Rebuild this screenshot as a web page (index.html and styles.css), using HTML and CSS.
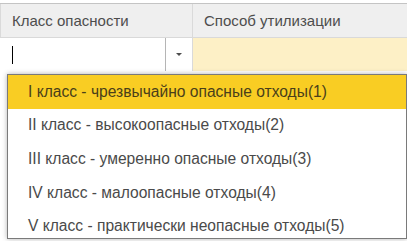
FILE: index.html
```html
<!DOCTYPE html>
<html lang="ru">
<head>
    <meta charset="UTF-8">
    <title>Класс опасности</title>
    <link rel="stylesheet" href="styles.css">
</head>
<body>
    <div class="grid">
        <!-- Header -->
        <div class="grid-head">
            <div class="head-cell col-class">Класс опасности</div>
            <div class="head-cell col-method">Способ утилизации</div>
        </div>

        <!-- Edit row -->
        <div class="grid-row">
            <div class="edit-cell col-class">
                <div class="edit-input"><span class="caret"></span></div>
                <div class="edit-btn"><span class="arrow"></span></div>
            </div>
            <div class="value-cell col-method"></div>
        </div>

        <!-- Dropdown list -->
        <ul class="choice-list">
            <li class="choice selected">I класс - чрезвычайно опасные отходы(1)</li>
            <li class="choice">II класс - высокоопасные отходы(2)</li>
            <li class="choice">III класс - умеренно опасные отходы(3)</li>
            <li class="choice">IV класс - малоопасные отходы(4)</li>
            <li class="choice">V класс - практически неопасные отходы(5)</li>
        </ul>
    </div>
</body>
</html>
```

FILE: styles.css
```css
/* Reset */
* {
    box-sizing: border-box;
    margin: 0;
    padding: 0;
}

body {
    font-family: "Liberation Sans", Arial, sans-serif;
    background-color: #ffffff;
    color: #4d4d4d;
    width: 407px;
    height: 241px;
    overflow: hidden;
}

.grid {
    position: relative;
    padding-top: 3px;
}

/* Header */
.grid-head {
    display: flex;
    height: 35px;
    border-top: 1px solid #c4c4c4;
    border-bottom: 1px solid #d9d9d9;
    background-color: #efefef;
}

.head-cell {
    display: flex;
    align-items: center;
    padding-left: 11px;
    font-size: 15px;
    color: #4d4d4d;
}

.col-class {
    width: 193px;
    border-right: 1px solid #dadada;
    border-left: 1px solid #dadada;
}

.col-method {
    flex: 1;
}

/* Edit row */
.grid-row {
    display: flex;
    height: 33px;
}

.edit-cell {
    display: flex;
    border-left: none;
}

.edit-input {
    width: 166px;
    border-right: 1px solid #b5b5b5;
    display: flex;
    align-items: center;
    padding-left: 12px;
}

.caret {
    display: block;
    width: 1px;
    height: 18px;
    background-color: #000;
}

.edit-btn {
    flex: 1;
    display: flex;
    align-items: center;
    justify-content: center;
}

.arrow {
    width: 0;
    height: 0;
    border-left: 3px solid transparent;
    border-right: 3px solid transparent;
    border-top: 3px solid #4d4d4d;
    margin-left: -1px;
}

.value-cell {
    background-color: #fdf0c6;
}

/* Dropdown */
.choice-list {
    position: absolute;
    top: 74px;
    left: 7px;
    width: 400px;
    height: 165px;
    overflow: hidden;
    list-style: none;
    background-color: #fff;
    border: 1px solid #7a7a7a;
    box-shadow: 0 0 5px rgba(0, 0, 0, 0.3);
}

.choice {
    height: 33.6px;
    flex-shrink: 0;
    display: flex;
    align-items: center;
    padding-left: 20px;
    font-size: 15.6px;
    color: #4a4a4a;
}

.choice.selected {
    background-color: #f9cd23;
    color: #4a3f1a;
}
```
